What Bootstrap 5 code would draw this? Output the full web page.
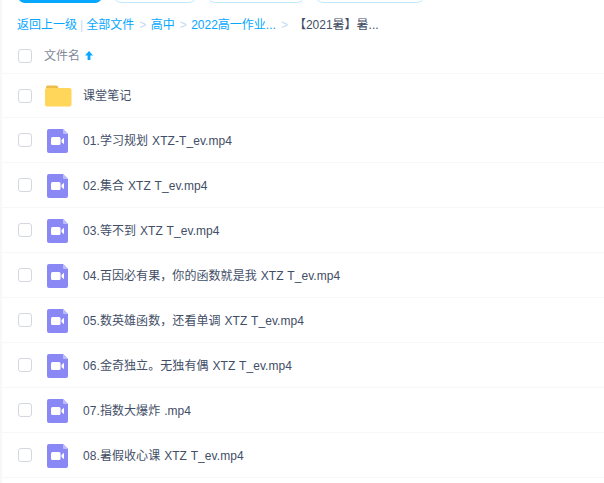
<!DOCTYPE html>
<html lang="zh">
<head>
<meta charset="utf-8">
<title>文件列表</title>
<link href="https://cdn.jsdelivr.net/npm/bootstrap@5.3.0/dist/css/bootstrap.min.css" rel="stylesheet">
<style>
html,body{height:483px;overflow:hidden;background:#fff}
body{font-family:"Liberation Sans","Noto Sans CJK SC",sans-serif;font-size:12px;color:#424e67}
.side-strip{width:2px;background:#f7f7f7;flex:none}
.shell{height:483px;overflow:hidden}
.main-pane{min-width:0}
.top-btns{height:3px;overflow:hidden;padding-left:15px;gap:10px}
.top-btn{height:20px;margin-top:-17px;border:1px solid #c1e9ff;border-radius:8px;flex:none}
.top-btn.primary-btn{background:#06a7ff;border-color:#06a7ff;width:86px}
.w1{width:84px}.w2{width:98px}.w3{width:110px}
.crumbs{height:40px;padding:4px 0 0 15px;font-size:12px;white-space:nowrap}
.crumbs a{color:#06a7ff;text-decoration:none}
.crumbs .sep{color:#c4d8f4;margin:0 4.3px 0 5.200px}
.crumbs .bar{color:#c4d8f4;margin:0 3px}
.crumbs .cur{color:#424e67;margin-left:1.500px}
.row-line{height:45px;border-bottom:1px solid #f5f7fa;padding-left:16px}
.head-line{height:31px;color:#818999;padding-bottom:5px}
.folder-line{height:44px}
.tick{width:14px;height:14px;border:1px solid #d4d7de;border-radius:3px;flex:none;background:#fff}
.ico-slot{width:40px;margin-left:12px;margin-top:2px;flex:none;display:flex;padding-left:3px}
.ico-slot.folder-slot{padding-left:1px;margin-top:1px}
.ico-slot svg{display:block}
.head-label{margin-left:12px}
.sort-up{margin-left:5px;display:block}
.fname{white-space:nowrap;margin-left:-1px;margin-top:2px;letter-spacing:.07px;word-spacing:.5px}
.folder-line .fname{margin-top:1px}
</style>
</head>
<body>
<div class="shell d-flex">
  <div class="side-strip"></div>
  <div class="main-pane flex-grow-1">
    <div class="top-btns d-flex">
      <div class="top-btn primary-btn"></div>
      <div class="top-btn w1"></div>
      <div class="top-btn w2"></div>
      <div class="top-btn w3"></div>
    </div>
    <div class="crumbs d-flex align-items-center">
      <a href="#">返回上一级</a><span class="bar">|</span><a href="#">全部文件</a><span class="sep">&gt;</span><a href="#">高中</a><span class="sep">&gt;</span><a href="#">2022高一作业...</a><span class="sep">&gt;</span><span class="cur">【2021暑】暑...</span>
    </div>
    <div class="row-line head-line d-flex align-items-center">
      <span class="tick"></span>
      <span class="head-label">文件名</span>
      <svg class="sort-up" width="8" height="9" viewBox="0 0 8 9"><path d="M4 0 8 4.6H5.4V9H2.6V4.6H0Z" fill="#06a7ff"/></svg>
    </div>
    <div class="row-line folder-line d-flex align-items-center">
      <span class="tick"></span>
      <span class="ico-slot folder-slot"><svg width="27" height="22" viewBox="0 0 27 22"><path d="M1 2.5C1 1 1.8.5 3 .5h8c1.4 0 2 .8 2.6 2.5H1Z" fill="#ecbd4c"/><rect x="0" y="3" width="26.5" height="18.500" rx="2" fill="#ffd659"/></svg></span>
      <span class="fname">课堂笔记</span>
    </div>
    <div class="row-line d-flex align-items-center"><span class="tick"></span><span class="ico-slot"><svg width="21" height="24" viewBox="0 0 21 24"><use href="#vid"/></svg></span><span class="fname">01.学习规划 XTZ-T_ev.mp4</span></div>
    <div class="row-line d-flex align-items-center"><span class="tick"></span><span class="ico-slot"><svg width="21" height="24" viewBox="0 0 21 24"><use href="#vid"/></svg></span><span class="fname">02.集合 XTZ T_ev.mp4</span></div>
    <div class="row-line d-flex align-items-center"><span class="tick"></span><span class="ico-slot"><svg width="21" height="24" viewBox="0 0 21 24"><use href="#vid"/></svg></span><span class="fname">03.等不到 XTZ T_ev.mp4</span></div>
    <div class="row-line d-flex align-items-center"><span class="tick"></span><span class="ico-slot"><svg width="21" height="24" viewBox="0 0 21 24"><use href="#vid"/></svg></span><span class="fname">04.百因必有果，你的函数就是我 XTZ T_ev.mp4</span></div>
    <div class="row-line d-flex align-items-center"><span class="tick"></span><span class="ico-slot"><svg width="21" height="24" viewBox="0 0 21 24"><use href="#vid"/></svg></span><span class="fname">05.数英雄函数，还看单调 XTZ T_ev.mp4</span></div>
    <div class="row-line d-flex align-items-center"><span class="tick"></span><span class="ico-slot"><svg width="21" height="24" viewBox="0 0 21 24"><use href="#vid"/></svg></span><span class="fname">06.金奇独立。无独有偶 XTZ T_ev.mp4</span></div>
    <div class="row-line d-flex align-items-center"><span class="tick"></span><span class="ico-slot"><svg width="21" height="24" viewBox="0 0 21 24"><use href="#vid"/></svg></span><span class="fname">07.指数大爆炸 .mp4</span></div>
    <div class="row-line d-flex align-items-center"><span class="tick"></span><span class="ico-slot"><svg width="21" height="24" viewBox="0 0 21 24"><use href="#vid"/></svg></span><span class="fname">08.暑假收心课 XTZ T_ev.mp4</span></div>
  </div>
</div>
<svg width="0" height="0" class="d-block"><defs><g id="vid"><path d="M2 0H16L21 5V22a2 2 0 0 1-2 2H2a2 2 0 0 1-2-2V2A2 2 0 0 1 2 0Z" fill="#8a88f5"/><path d="M16 0 21 5H17a1 1 0 0 1-1-1Z" fill="#bdbcfa"/><rect x="4" y="8" width="9.500" height="8" rx="1.500" fill="#fff"/><path d="M14.500 11 17 8.800V15.200L14.500 13Z" fill="#fff"/></g></defs></svg>
<script src="https://cdn.jsdelivr.net/npm/bootstrap@5.3.0/dist/js/bootstrap.bundle.min.js"></script>
</body>
</html>
